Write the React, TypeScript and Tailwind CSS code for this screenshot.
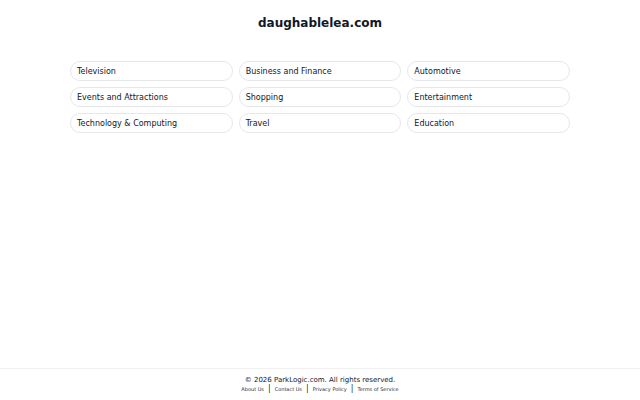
const categories = [
  "Television",
  "Business and Finance",
  "Automotive",
  "Events and Attractions",
  "Shopping",
  "Entertainment",
  "Technology & Computing",
  "Travel",
  "Education",
];

const links = ["About Us", "Contact Us", "Privacy Policy", "Terms of Service"];

export default function App() {
  return (
    <div
      className="flex min-h-screen flex-col bg-white text-gray-900"
      style={{ fontFamily: '"DejaVu Sans", sans-serif' }}
    >
      <main className="flex-1">
        <h1 className="pt-[15px] text-center text-[12px] leading-[16px] font-bold text-[#111827]">
          daughablelea.com
        </h1>

        <div className="mx-auto mt-[30px] grid w-[500px] grid-cols-3 gap-[6px]">
          {categories.map((name) => (
            <a
              key={name}
              href="#"
              className="flex h-[20px] items-center rounded-full border border-[#e5e7eb] px-[6px] pt-[1px] text-[8px] leading-[12px] text-[#111827]"
            >
              {name}
            </a>
          ))}
        </div>
      </main>

      <footer className="border-t border-[#f0f0f0] pt-[6px] pb-[7px] text-center">
        <p className="text-[7px] leading-[10px] text-[#111827]">
          © 2026 ParkLogic.com. All rights reserved.
        </p>
        <div className="flex items-center justify-center text-[5px] leading-[8px] text-[#1f2937]">
          {links.map((link, i) => (
            <span key={link} className="flex items-center">
              {i > 0 && (
                <span className="mx-[4px] text-[8px] leading-[8px] text-[#1f2937]">|</span>
              )}
              <a href="#">{link}</a>
            </span>
          ))}
        </div>
      </footer>
    </div>
  );
}
